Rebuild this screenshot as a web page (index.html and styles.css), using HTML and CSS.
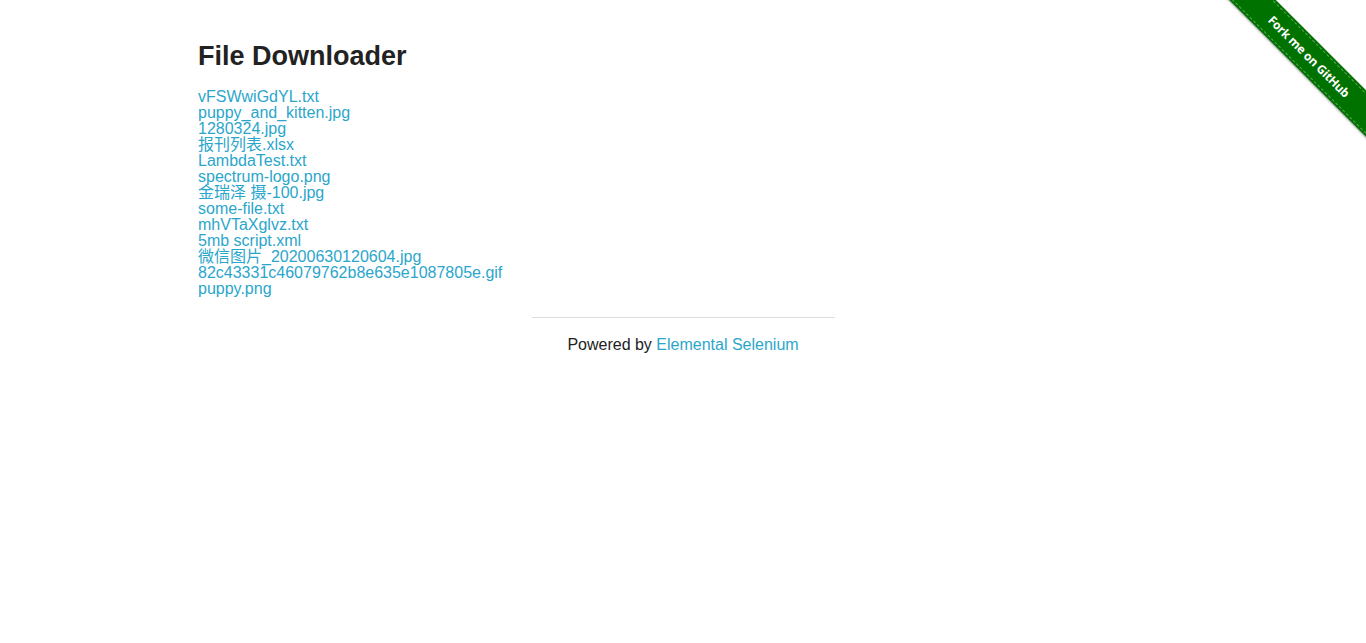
FILE: index.html
```html
<!DOCTYPE html>
<html lang="en">
<head>
<meta charset="utf-8">
<title>The Internet</title>
<link rel="stylesheet" href="styles.css">
</head>
<body>
<div class="ribbon-wrap">
  <a class="ribbon" href="#">Fork me on GitHub</a>
</div>
<div class="row">
  <div class="content">
    <h3 class="title">File Downloader</h3>
    <div class="files">
      <a href="#">vFSWwiGdYL.txt</a>
      <a href="#">puppy_and_kitten.jpg</a>
      <a href="#">1280324.jpg</a>
      <a href="#">报刊列表.xlsx</a>
      <a href="#">LambdaTest.txt</a>
      <a href="#">spectrum-logo.png</a>
      <a href="#">金瑞泽 摄-100.jpg</a>
      <a href="#">some-file.txt</a>
      <a href="#">mhVTaXglvz.txt</a>
      <a href="#">5mb script.xml</a>
      <a href="#">微信图片_20200630120604.jpg</a>
      <a href="#">82c43331c46079762b8e635e1087805e.gif</a>
      <a href="#">puppy.png</a>
    </div>
  </div>
</div>
<div class="footer">
  <hr class="rule">
  <div class="powered">Powered by <a href="#">Elemental Selenium</a></div>
</div>
</body>
</html>
```
FILE: styles.css
```css
html, body {
  margin: 0;
  padding: 0;
  background: #fff;
}
body {
  font-family: "Liberation Sans", Arial, "Noto Sans CJK SC", sans-serif;
  font-size: 16px;
  line-height: 16px;
  color: #222;
}
a {
  color: #2ba6cb;
  text-decoration: none;
}
.row {
  width: 1000px;
  margin: 0 auto;
}
.content {
  padding: 40px 15px 0;
}
.title {
  margin: 0 0 17px;
  font-size: 27px;
  line-height: 32px;
  font-weight: bold;
  color: #222;
}
.files {
  display: flex;
  flex-direction: column;
  align-items: flex-start;
}
.files a {
  display: block;
  line-height: 16px;
}
.footer {
  width: 303px;
  margin: 20px auto 0;
}
.rule {
  margin: 0;
  border: 0;
  border-top: 1px solid #ddd;
  height: 0;
}
.powered {
  margin-top: 19px;
  text-align: center;
}
.ribbon-wrap {
  position: absolute;
  top: 0;
  right: 0;
  width: 149px;
  height: 149px;
  overflow: hidden;
}
.ribbon {
  position: absolute;
  left: -18px;
  top: 40px;
  width: 220px;
  height: 33px;
  background: #007200;
  color: #fff;
  transform: rotate(45deg);
  font-family: "Open Sans", "Liberation Sans", sans-serif;
  font-weight: bold;
  font-size: 12px;
  letter-spacing: -0.2px;
  line-height: 33px;
  text-align: center;
  box-shadow: 0 1px 2px rgba(0,0,0,0.35);
}
.ribbon::before,
.ribbon::after {
  content: "";
  position: absolute;
  left: 0;
  right: 0;
  height: 0;
  border-top: 1px dashed rgba(255,255,255,0.35);
}
.ribbon::before { top: 2px; }
.ribbon::after { bottom: 2px; }
```
